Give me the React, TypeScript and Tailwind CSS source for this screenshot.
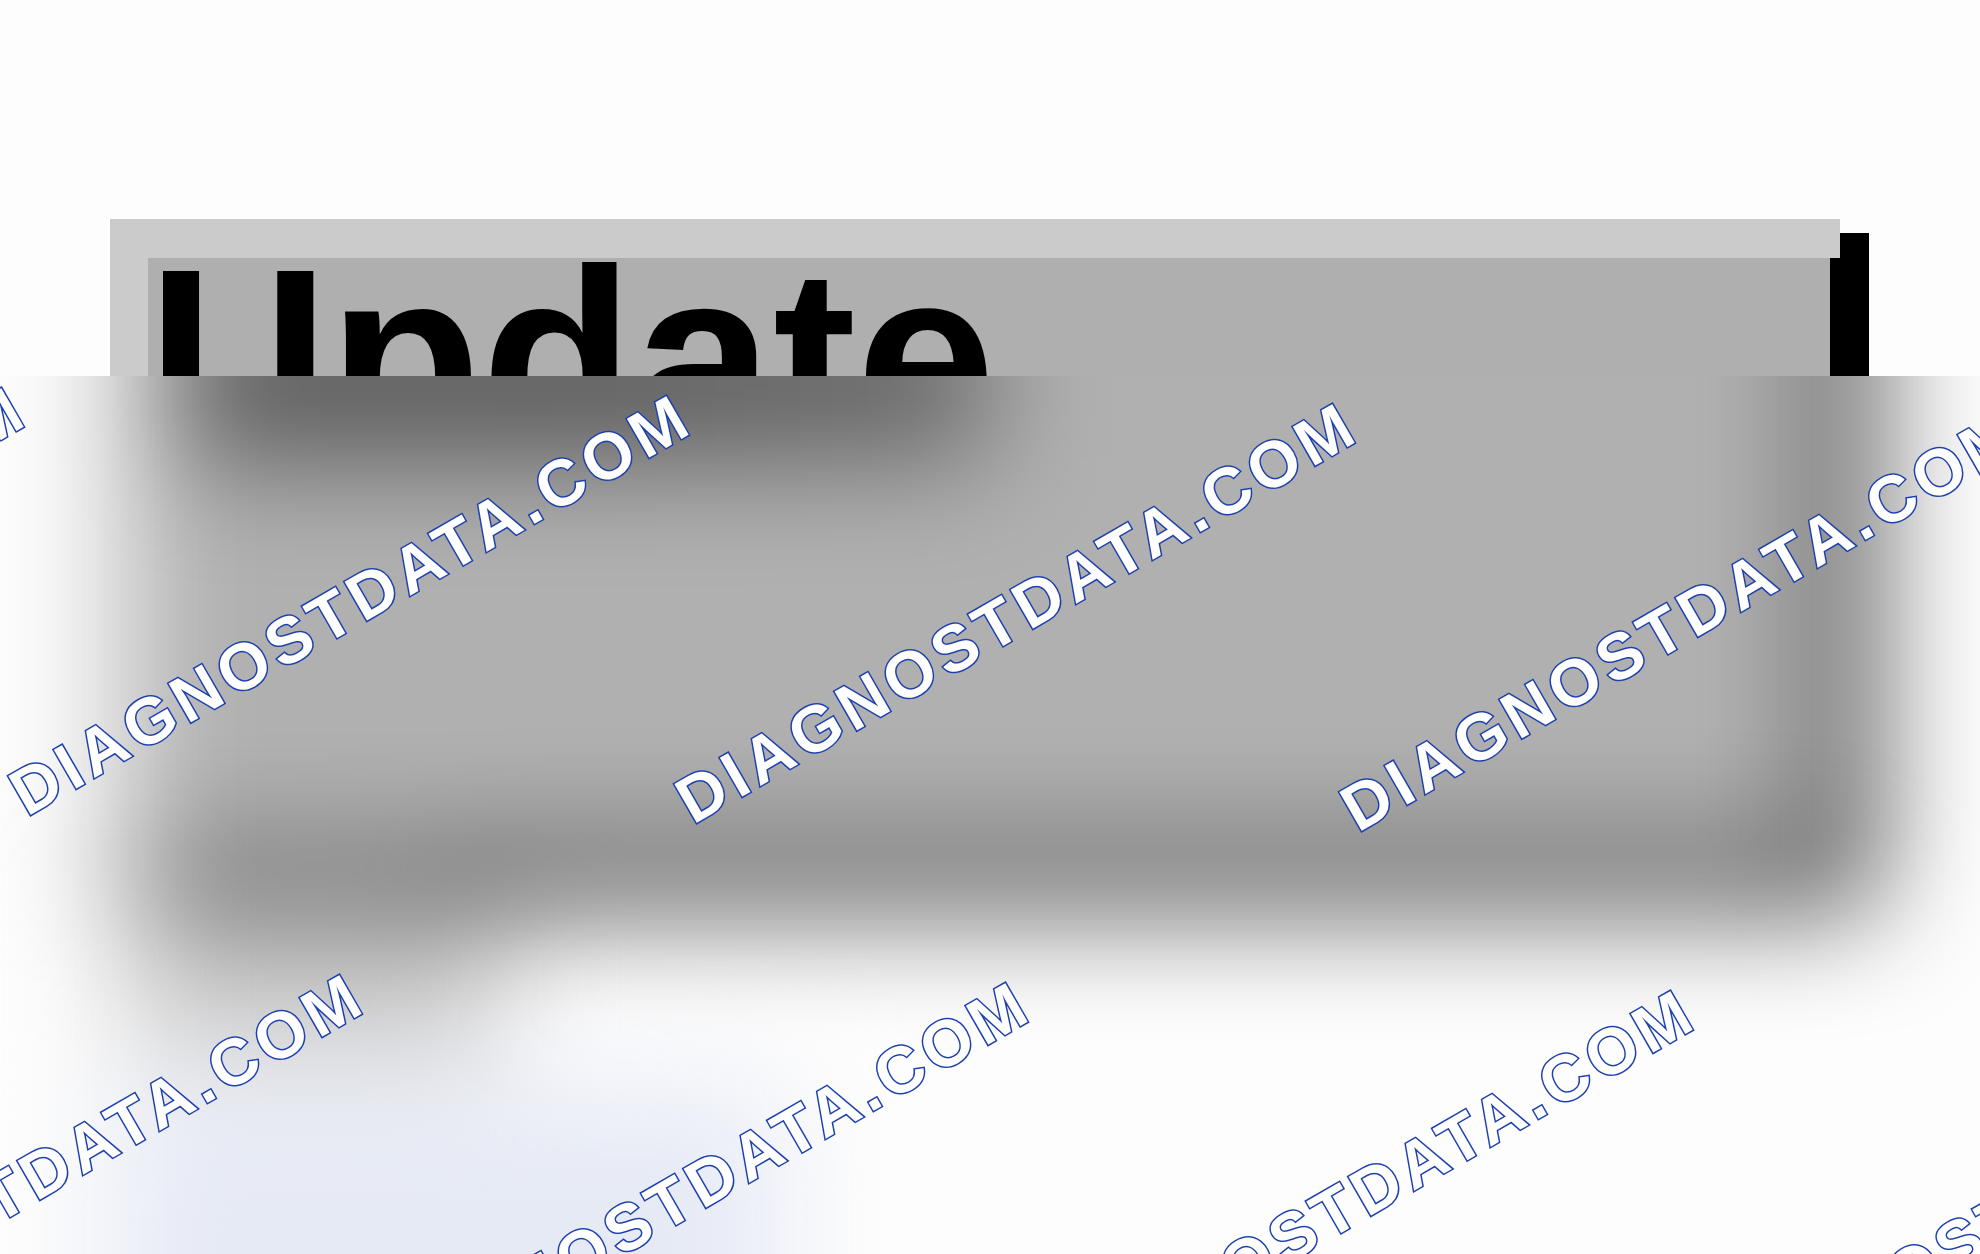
const watermarks = [
  "left-[-638px] top-[379px]",
  "left-[27px] top-[387px]",
  "left-[693px] top-[395px]",
  "left-[1358px] top-[403px]",
  "left-[-300px] top-[966px]",
  "left-[366px] top-[974px]",
  "left-[1031px] top-[982px]",
  "left-[1697px] top-[990px]",
];

function UpdateButton() {
  return (
    <button type="button" className="flex h-[157px] w-full overflow-hidden text-left">
      <span className="h-full flex-1 border-l-[38px] border-t-[39px] border-[#cbcbcb] bg-[#afafaf]">
        <span className="block font-['Liberation_Sans',sans-serif] text-[250px] font-bold leading-[200px] text-black">
          Update
        </span>
      </span>
      <span className="flex h-full w-[39px] flex-col">
        <span className="flex h-[39px]">
          <span className="w-[10px] bg-[#cbcbcb]" />
          <span className="mt-[14px] flex-1 bg-black" />
        </span>
        <span className="flex-1 bg-black" />
      </span>
    </button>
  );
}

function FrostedBackground() {
  return (
    <div className="-mt-[300px] pl-[110px] pr-[111px] blur-[58px]" aria-hidden="true">
      <div className="flex h-[789px]">
        <div className="w-[39px] bg-[#cbcbcb]" />
        <div className="flex-1 bg-[#b0b0b0] pl-8 pt-[230px]">
          <div className="h-[154px] w-[808px] bg-linear-to-r from-[#5c5c5c] via-[#5a5a5a] to-[#686868]" />
        </div>
        <div className="w-[38px] bg-black" />
      </div>
      <div className="flex h-[38px]">
        <div className="w-[60px] bg-[#808080]" />
        <div className="w-[280px] bg-[#303030]" />
        <div className="flex-1 bg-black" />
      </div>
      <div className="ml-5 h-[150px] w-[370px] bg-[#c8c8c8]" />
      <div className="mt-9 h-[500px] w-[670px] bg-[#e6eaf5]" />
    </div>
  );
}

export default function App() {
  return (
    <main className="flex h-screen flex-col overflow-hidden bg-[#fdfdfd]">
      <div className="pl-[110px] pr-[111px] pt-[219px]">
        <UpdateButton />
      </div>
      <section className="relative min-h-0 flex-1 overflow-hidden">
        <FrostedBackground />
        <div className="pointer-events-none absolute inset-0 overflow-hidden">
          {watermarks.map((place) => (
            <span
              key={place}
              className={`absolute ${place} origin-[0_54px] -rotate-30 whitespace-nowrap font-['Liberation_Sans',sans-serif] text-[65px] font-bold leading-[64px] tracking-[0.087em] text-white [-webkit-text-stroke:3px_#1d40af] [paint-order:stroke_fill]`}
            >
              DIAGNOSTDATA.COM
            </span>
          ))}
        </div>
      </section>
    </main>
  );
}
